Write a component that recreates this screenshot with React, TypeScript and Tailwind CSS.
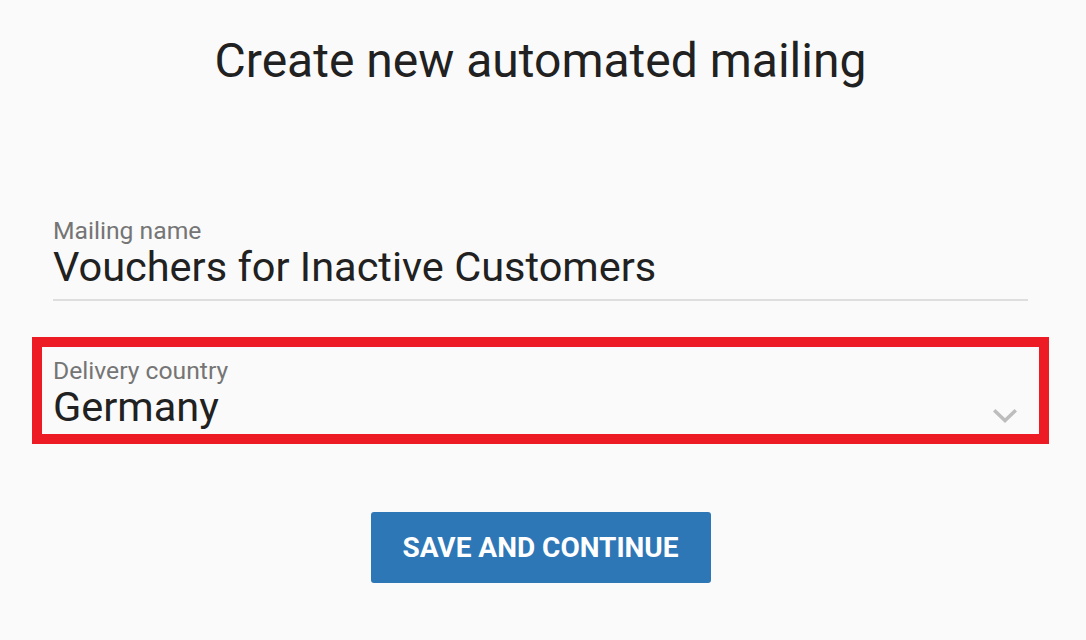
import React from 'react';

function ChevronDown() {
  return (
    <svg width="24" height="15" viewBox="0 0 24 15" fill="none" stroke="#bdbdbd" strokeWidth="3.5" strokeLinecap="square">
      <path d="M2.5 2.5 L12 11.5 L21.5 2.5" />
    </svg>
  );
}

export default function App() {
  return (
    <div className="min-h-screen bg-[#fafafa] pr-[5px] font-['Roboto',sans-serif] text-[#212121]">
      {/* Title */}
      <h1 className="pt-[33px] text-center text-[48px] leading-[56px] font-normal">
        Create new automated mailing
      </h1>

      <div className="mx-auto mt-[128px] w-[975px]">
        {/* Mailing name */}
        <div className="border-b-2 border-[#dedede] pb-[10px]">
          <label className="block text-[24.7px] leading-[28px] text-[#757575]">Mailing name</label>
          <div className="text-[41.5px] leading-[44px]">Vouchers for Inactive Customers</div>
        </div>

        {/* Delivery country (highlighted) */}
        <div className="-mx-[21px] mt-[36px] border-[10px] border-[#ed1c24] pl-[11px] pr-[9px] pt-[10px] pb-[5px]">
          <label className="block text-[24.7px] leading-[28px] text-[#757575]">Delivery country</label>
          <div className="flex items-end justify-between">
            <span className="text-[41.5px] leading-[44px]">Germany</span>
            <span className="mb-[5px] mr-[13px] flex"><ChevronDown /></span>
          </div>
        </div>

        <div className="mt-[68px] flex justify-center">
          <button className="h-[71px] w-[340px] rounded-[3px] bg-[#2e77b7] text-[28px] font-bold uppercase text-white">
            Save and continue
          </button>
        </div>
      </div>
    </div>
  );
}
